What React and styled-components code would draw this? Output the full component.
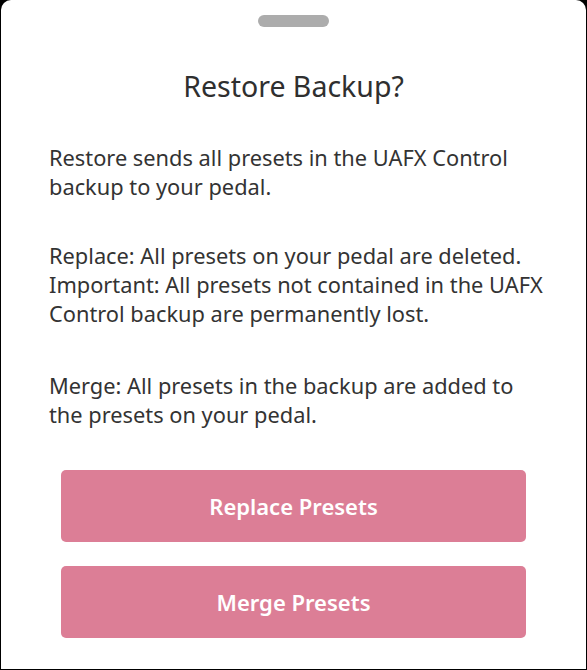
import React from "react";
import styled, { createGlobalStyle } from "styled-components";

const GlobalStyle = createGlobalStyle`
  html, body {
    margin: 0;
    padding: 0;
    background: #000;
  }
  body {
    font-family: "Noto Sans", "Open Sans", sans-serif;
  }
`;

const Sheet = styled.div`
  box-sizing: border-box;
  margin: 0 1px;
  height: 669px;
  background: #fff;
  border-radius: 10px 10px 0 0;
  padding-top: 15px;
  display: flex;
  flex-direction: column;
  align-items: center;
`;

const Handle = styled.div`
  width: 71px;
  height: 12px;
  border-radius: 6px;
  background: #acacac;
`;

const Title = styled.h1`
  margin: 42px 0 0;
  font-size: 28.5px;
  line-height: 34px;
  font-weight: 400;
  color: #2f2f2f;
`;

const Body = styled.div`
  align-self: stretch;
  padding: 40px 0 0 48px;
  color: #333;
`;

const Paragraph = styled.p`
  margin: 0 0 ${(p) => p.$gap || 40}px;
  font-size: 21.8px;
  line-height: 29px;
`;

const Actions = styled.div`
  align-self: stretch;
  padding: 1px 60px 0;
  display: flex;
  flex-direction: column;
  gap: 24px;
`;

const ActionButton = styled.button`
  height: 72px;
  border: none;
  border-radius: 5px;
  background: #dc7e96;
  color: #fff;
  font-family: inherit;
  font-size: 22px;
  font-weight: 600;
  cursor: pointer;
`;

export default function App() {
  return (
    <>
      <GlobalStyle />
      <Sheet>
        <Handle />
        <Title>Restore Backup?</Title>
        <Body>
          <Paragraph>
            Restore sends all presets in the UAFX Control
            <br />
            backup to your pedal.
          </Paragraph>
          <Paragraph $gap={43}>
            Replace: All presets on your pedal are deleted.
            <br />
            Important: All presets not contained in the UAFX
            <br />
            Control backup are permanently lost.
          </Paragraph>
          <Paragraph>
            Merge: All presets in the backup are added to
            <br />
            the presets on your pedal.
          </Paragraph>
        </Body>
        <Actions>
          <ActionButton>Replace Presets</ActionButton>
          <ActionButton>Merge Presets</ActionButton>
        </Actions>
      </Sheet>
    </>
  );
}
